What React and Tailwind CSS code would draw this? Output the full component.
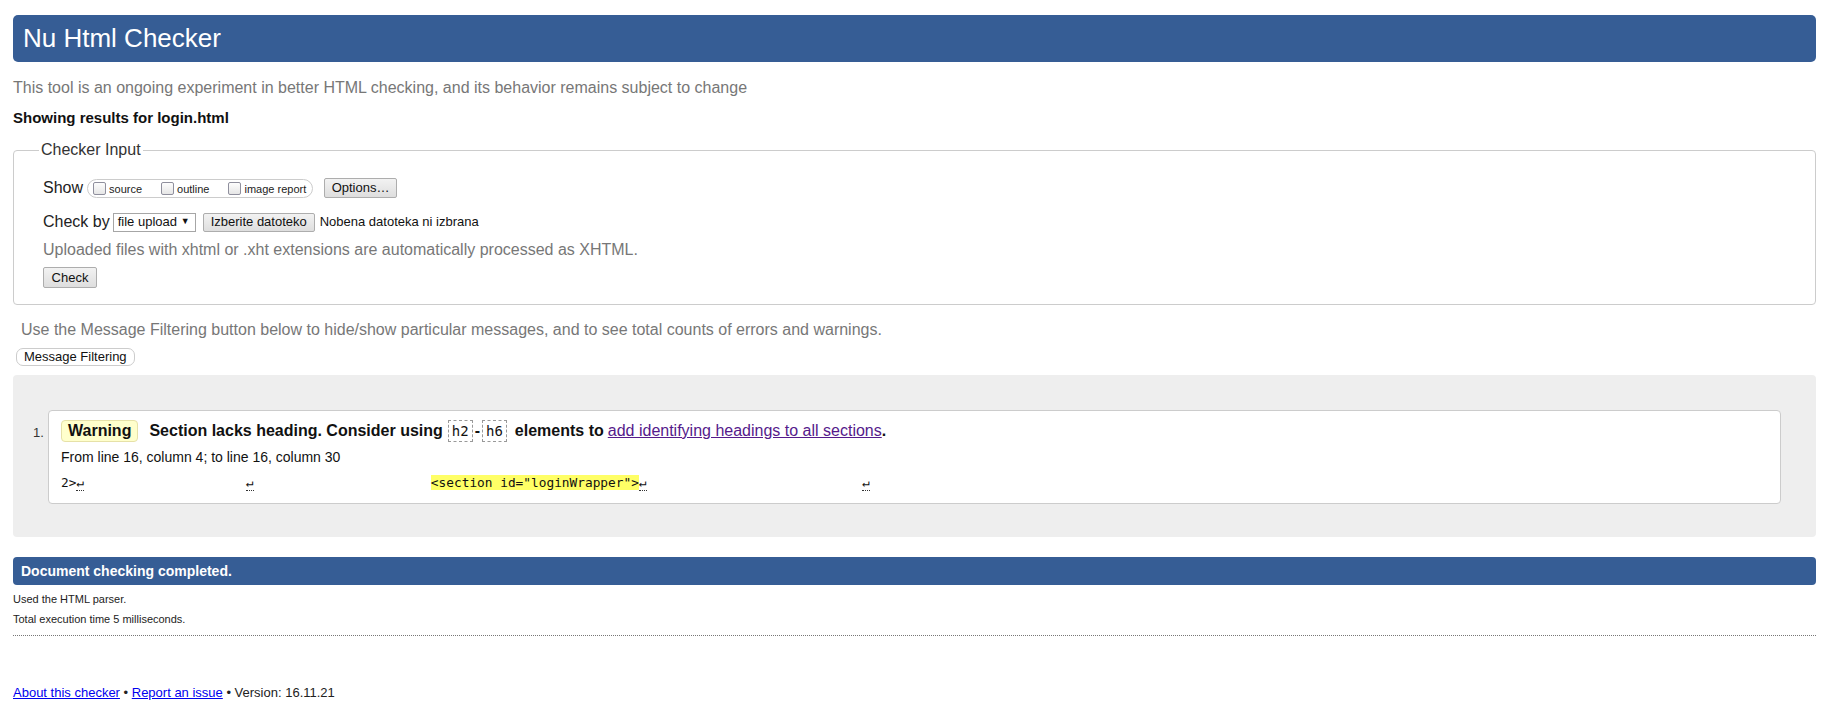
import React from 'react';

const sans = { fontFamily: '"Liberation Sans", Arial, sans-serif' };

function Box({ label }) {
  return (
    <span className="inline-flex items-center gap-[3px]">
      <span className="inline-block w-[13px] h-[13px] rounded-[2px] border border-[#8f8f9d] bg-gradient-to-b from-[#fdfdfd] to-[#e6e6e6]" />
      <span className="text-[11px] text-[#222] mt-[3px]">{label}</span>
    </span>
  );
}

function Btn({ children, className = '' }) {
  return (
    <span className={`inline-flex items-center justify-center border border-[#adadad] bg-gradient-to-b from-[#f2f2f2] to-[#dedede] rounded-[2px] text-[13px] text-[#111] ${className}`}>
      {children}
    </span>
  );
}

function Lf() {
  return <span className="inline-block border-b border-dotted border-[#333] leading-[15px]">↵</span>;
}

export default function App() {
  return (
    <div className="min-h-[708px] bg-white pl-[13px] pr-[16px] pt-[15px] text-[#222]" style={sans}>
      {/* header */}
      <div className="h-[47px] rounded-[5px] bg-[#365d95] flex items-center pl-[10px]">
        <h1 className="text-[26px] text-white font-normal">Nu Html Checker</h1>
      </div>

      <p className="mt-[16px] text-[16px] leading-[20px] text-[#777]">
        This tool is an ongoing experiment in better HTML checking, and its behavior remains subject to change
      </p>
      <p className="mt-[10px] text-[15px] leading-[20px] font-bold text-[#111]">Showing results for login.html</p>

      {/* checker input */}
      <fieldset className="mt-[13px] border border-[#ccc] rounded-[4px] px-[29px] pb-[15px]">
        <legend className="-ml-[4px] px-[2px] text-[16px] leading-[18px] text-[#333]">Checker Input</legend>
        <div className="mt-[19px] flex items-center h-[20px]">
          <span className="text-[16px] text-[#222]">Show</span>
          <span className="ml-[4px] h-[19px] w-[226px] border border-[#ccc] rounded-full flex items-center pl-[5px] gap-[19px]">
            <Box label="source" />
            <Box label="outline" />
            <Box label="image report" />
          </span>
          <Btn className="ml-[11px] h-[20px] w-[73px]">Options…</Btn>
        </div>
        <div className="mt-[14px] flex items-center h-[20px]">
          <span className="text-[16px] text-[#222]">Check by</span>
          <span className="ml-[3px] h-[19px] w-[83px] border border-[#a6a6a6] bg-white flex items-center justify-between pl-[4px] pr-[5px] text-[13px] text-[#111]">
            <span>file upload</span>
            <span className="text-[9px]">▼</span>
          </span>
          <Btn className="ml-[7px] h-[19px] w-[112px]">Izberite datoteko</Btn>
          <span className="ml-[5px] text-[13px] text-[#111]">Nobena datoteka ni izbrana</span>
        </div>
        <p className="mt-[8px] text-[16px] leading-[20px] text-[#777]">
          Uploaded files with xhtml or .xht extensions are automatically processed as XHTML.
        </p>
        <Btn className="mt-[7px] h-[21px] w-[54px]">Check</Btn>
      </fieldset>

      <p className="mt-[15px] pl-[8px] text-[16px] leading-[20px] text-[#777]">
        Use the Message Filtering button below to hide/show particular messages, and to see total counts of errors and warnings.
      </p>
      <span className="mt-[8px] ml-[3px] inline-flex items-center h-[18px] px-[7px] border border-[#ccc] rounded-[7px] bg-white text-[13px] text-[#111]">
        Message Filtering
      </span>

      {/* results */}
      <div className="mt-[7px] bg-[#eeeeee] rounded-[4px] px-[35px] pt-[35px] pb-[33px]">
        <ol>
          <li className="relative bg-white border border-[#ccc] rounded-[4px] pl-[12px] pr-[12px] pt-[9px] pb-[12px]">
            <span className="absolute -left-[16px] top-[12px] text-[13px] text-[#333]">1.</span>
            <p className="flex items-center text-[16px] leading-[22px] font-bold text-[#111]">
              <span className="inline-flex items-center h-[22px] px-[6px] bg-[#ffffcc] border border-[#e6e1a8] rounded-[4px]">Warning</span>
              <span className="ml-[11px]">Section lacks heading. Consider using</span>
              <code className="ml-[5px] px-[3px] border border-dashed border-[#999] font-normal text-[14px] leading-[20px]" style={{ fontFamily: '"DejaVu Sans Mono", monospace' }}>h2</code>
              <span className="mx-[2px]">-</span>
              <code className="px-[3px] border border-dashed border-[#999] font-normal text-[14px] leading-[20px]" style={{ fontFamily: '"DejaVu Sans Mono", monospace' }}>h6</code>
              <span className="ml-[8px]">elements to</span>
              <a className="ml-[4px] font-normal text-[#551a8b] underline" href="#">add identifying headings to all sections</a>
              <span>.</span>
            </p>
            <p className="mt-[6px] text-[14px] leading-[18px] text-[#111]">From line 16, column 4; to line 16, column 30</p>
            <p className="mt-[9px] text-[12.8px] leading-[16px] whitespace-pre text-[#111]" style={{ fontFamily: '"DejaVu Sans Mono", monospace' }}>
              {'2>'}<Lf />{'                     '}<Lf />{'                       '}<mark className="bg-[#ffff66] text-[#111]">{'<section id="loginWrapper">'}</mark><Lf />{'                            '}<Lf />
            </p>
          </li>
        </ol>
      </div>

      {/* summary */}
      <div className="mt-[20px] h-[28px] rounded-[4px] bg-[#365d95] flex items-center pl-[8px]">
        <span className="text-[14px] font-bold text-white">Document checking completed.</span>
      </div>
      <p className="mt-[7px] text-[11px] leading-[14px] text-[#222]">Used the HTML parser.</p>
      <p className="mt-[6px] text-[11px] leading-[14px] text-[#222]">Total execution time 5 milliseconds.</p>
      <div className="mt-[9px] border-t border-dotted border-[#777]" />

      <p className="mt-[49px] text-[13px] leading-[16px] text-[#222]">
        <a className="text-[#0000ee] underline" href="#">About this checker</a> •{' '}
        <a className="text-[#0000ee] underline" href="#">Report an issue</a> • Version: 16.11.21
      </p>
    </div>
  );
}
